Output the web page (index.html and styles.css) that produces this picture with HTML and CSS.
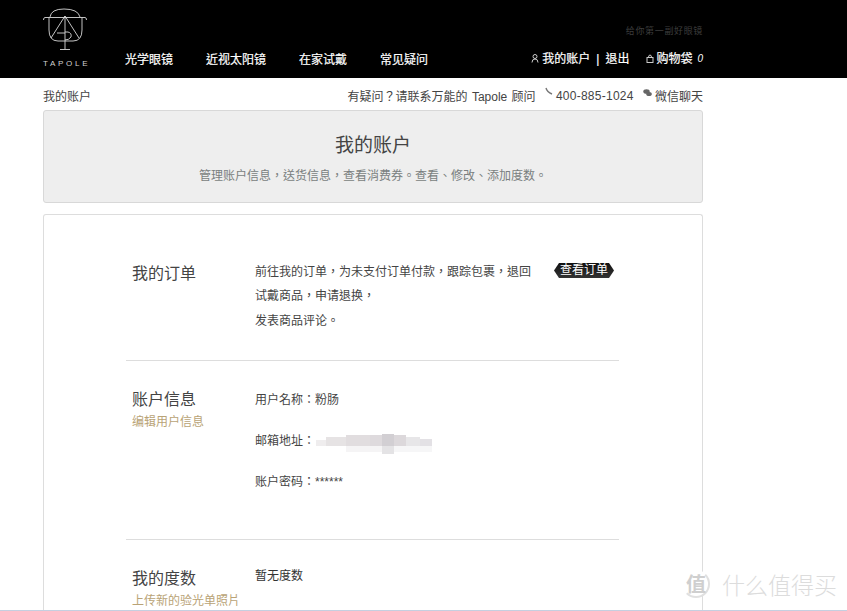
FILE: index.html
```html
<!DOCTYPE html>
<html lang="zh-TW">
<head>
<meta charset="utf-8">
<title>我的账户 - Tapole</title>
<link rel="stylesheet" href="styles.css">
</head>
<body>
<header class="topbar">
  <div class="brand">
    <svg class="logo" width="46" height="44" viewBox="0 0 46 44" fill="none" stroke="#d8d8d8" stroke-width="0.900">
      <path d="M7 9 Q8 1 21 1 Q35 1 37 9"/>
      <path d="M0.500 12 Q0.500 9.500 2 9.500 H42 Q43.500 9.500 43.500 12"/>
      <path d="M6 9.500 V22 Q6 33 15 33 H30 Q39 33 39 22 V9.500"/>
      <path d="M22 8 L8 30 M22 8 L36 30"/>
      <path d="M14 25 H22"/>
      <path d="M22 8 V41 M17 41.500 H27"/>
      <path d="M22 24 H25 Q29 25 28 29 Q26 32 22 32"/>
    </svg>
    <div class="wordmark">TAPOLE</div>
  </div>
  <div class="topmain">
    <div class="slogan">给你第一副好眼镜</div>
    <div class="navrow">
      <nav class="nav">
        <a>光学眼镜</a><a>近视太阳镜</a><a>在家试戴</a><a>常见疑问</a>
      </nav>
      <div class="account">
        <svg width="8" height="9" viewBox="0 0 8 9" fill="none" stroke="#ccc"><circle cx="4" cy="2.500" r="2"/><path d="M1 8.500 Q1 5 4 5 Q7 5 7 8.500"/></svg>
        <span class="acct-text">我的账户</span><span class="sep">|</span><span>退出</span>
        <svg class="bag" width="8" height="9" viewBox="0 0 8 9" fill="none" stroke="#ccc"><rect x="1" y="3.500" width="6" height="5"/><path d="M2.500 3.500 Q2.500 1 4 1 Q5.500 1 5.500 3.500"/></svg>
        <span class="bag-text">购物袋</span><em class="count">0</em>
      </div>
    </div>
  </div>
</header>

<main class="page">
  <div class="crumbs">
    <span>我的账户</span>
    <div class="help">
      <span class="ask">有疑问？请联系万能的 Tapole 顾问</span>
      <span class="help-item">
        <svg width="8" height="9" viewBox="0 0 8 9" fill="none" stroke="#777" stroke-width="1.400"><path d="M1 1 Q2 5 7 7"/></svg>
        <span class="phone">400-885-1024</span></span>
      <span class="help-item">
        <svg width="9" height="8" viewBox="0 0 9 8" fill="#666"><ellipse cx="3.500" cy="2.500" rx="3.200" ry="2.300"/><ellipse cx="6" cy="5" rx="2.800" ry="2"/></svg>
        微信聊天</span>
    </div>
  </div>

  <section class="hero">
    <h1>我的账户</h1>
    <p>管理账户信息，送货信息，查看消费券。查看、修改、添加度数。</p>
  </section>

  <section class="card">
    <div class="row row-orders">
      <div class="label"><h2>我的订单</h2></div>
      <div class="body orders-text">
        <p>前往我的订单，为未支付订单付款，跟踪包裹，退回</p>
        <p>试戴商品，申请退换，</p>
        <p>发表商品评论。</p>
      </div>
      <a class="pill">查看订单</a>
    </div>
    <div class="row row-info">
      <div class="label"><h2>账户信息</h2><a class="sub">编辑用户信息</a></div>
      <div class="body info-text">
        <p>用户名称：粉肠</p>
        <p class="email">邮箱地址：<svg class="mosaic" width="116" height="24" viewBox="0 0 116 24">
          <g fill="#e6e3e4"><rect x="0" y="6" width="10" height="6" fill="#efedee"/><rect x="10" y="3" width="20" height="9"/><rect x="30" y="1" width="24" height="11" fill="#e1dddf"/><rect x="54" y="1" width="12" height="11" fill="#dedadd"/><rect x="66" y="0" width="12" height="12" fill="#d2cfd3"/><rect x="78" y="1" width="12" height="11" fill="#dcd8db"/><rect x="90" y="3" width="14" height="9" fill="#e7e6e8"/><rect x="104" y="5" width="12" height="7" fill="#e3e1e5"/><rect x="30" y="12" width="36" height="6" fill="#f5f4f5"/><rect x="66" y="12" width="12" height="8" fill="#e4e3e5"/><rect x="78" y="12" width="38" height="6" fill="#f6f6f7"/></g>
        </svg></p>
        <p>账户密码：******</p>
      </div>
    </div>
    <div class="row row-rx">
      <div class="label"><h2>我的度数</h2><a class="sub">上传新的验光单照片</a></div>
      <div class="body"><p class="dark">暂无度数</p></div>
    </div>
  </section>
</main>

<div class="watermark">
  <span class="wm-badge">值</span><span class="wm-text">什么值得买</span>
</div>
</body>
</html>
```

FILE: styles.css
```css
* { box-sizing: border-box; }
html, body { margin: 0; padding: 0; height: 611px; overflow: hidden; }
body {
  background: #fff;
  color: #555;
  font-family: "Liberation Sans", "Noto Sans CJK TC", sans-serif;
  font-size: 12px;
  border-bottom: 1px solid #c5cfe0;
  position: relative;
}
h1, h2, p { margin: 0; font-weight: normal; }

.topbar {
  background: #000;
  height: 78px;
  display: flex;
  padding: 8px 144px 0 43px;
}
.brand { width: 82px; flex: none; }
.logo { display: block; }
.wordmark {
  color: #d0d0d0;
  font-size: 8px;
  letter-spacing: 2.700px;
  line-height: 10px;
  margin-top: 7px;
  font-family: "Liberation Sans", sans-serif;
}
.topmain { flex: 1; display: flex; flex-direction: column; }
.slogan {
  color: #3c3c3c;
  font-family: "Noto Sans CJK TC", sans-serif;
  font-size: 9px;
  letter-spacing: 0.650px;
  line-height: 12px;
  text-align: right;
  margin-top: 17px;
}
.navrow {
  display: flex;
  justify-content: space-between;
  align-items: center;
  margin-top: 15px;
  color: #fff;
  font-weight: 400;
}
.nav { display: flex; gap: 33px; font-size: 12px; line-height: 16px; }
.nav a { color: #fff; -webkit-text-stroke: 0.2px #fff; }
.account { display: flex; align-items: center; gap: 3px; line-height: 16px; margin-top: -3px; -webkit-text-stroke: 0.2px #fff; }
.sep { margin: 0 3px 0 3px; }
.bag { margin-left: 14px; }
.bag-text { margin-left: -1px; }
.count { font-size: 10px; margin-left: 2px; -webkit-text-stroke: 0; }

.page { padding: 0 144px 0 43px; }
.crumbs {
  height: 32px;
  display: flex;
  justify-content: space-between;
  align-items: center;
  padding-top: 3px;
  color: #444;
}
.help { display: flex; gap: 9px; }
.ask { word-spacing: 1px; }
.phone { letter-spacing: 0.250px; }
.help-item svg { vertical-align: 4px; }

.hero {
  height: 93px;
  background: #eee;
  border: 1px solid #d8d8d8;
  border-radius: 3px;
  text-align: center;
  padding-top: 23px;
}
.hero h1 { font-size: 19px; line-height: 24px; color: #444; }
.hero p { margin-top: 9px; font-size: 12px; line-height: 18px; color: #7a7f80; }

.card {
  margin-top: 11px;
  border: 1px solid #ddd;
  border-bottom: 0;
  border-radius: 3px 3px 0 0;
  height: 396px;
  padding: 0 83px 0 82px;
}
.row {
  display: flex;
  border-bottom: 1px solid #ddd;
  padding-left: 6px;
}
.row:last-child { border-bottom: 0; }
.row-orders { height: 146px; padding-top: 44px; }
.row-info { height: 179px; padding-top: 26px; }
.row-rx { padding-top: 26px; }
.label { width: 123px; flex: none; padding-top: 1px; }
.label h2 { font-size: 16px; line-height: 24px; color: #444; }
.row-orders .label { padding-top: 3px; }
.sub { display: block; color: #b9a376; font-size: 12px; line-height: 18px; margin-top: 1px; }
.body { color: #444; }
.orders-text { width: 299px; flex: none; padding-top: 0.500px; }
.orders-text p { line-height: 24.500px; }
.info-text { padding-top: 1px; }
.info-text p { line-height: 24px; height: 41px; }
.email { display: flex; align-items: flex-start; }
.mosaic { flex: none; margin-top: 5px; margin-left: 1px; }
.row-rx .body { margin-top: -2px; }
.dark { color: #333; line-height: 24px; }
.pill {
  align-self: flex-start;
  margin-top: 4px;
  background: linear-gradient(#111, #333);
  color: #fff;
  line-height: 15px;
  padding: 0 6px;
  clip-path: polygon(5px 0, calc(100% - 5px) 0, 100% 50%, calc(100% - 5px) 100%, 5px 100%, 0 50%);
}

.watermark {
  position: absolute;
  right: 10px;
  bottom: 12px;
  display: flex;
  align-items: center;
  gap: 12px;
  color: #dcdcdc;
  font-family: "Noto Sans CJK TC", sans-serif;
}
.wm-badge {
  width: 28px;
  height: 28px;
  border-radius: 50%;
  border: 2px solid;
  border-color: transparent #e0e0e0 #e0e0e0 transparent;
  background: #fff;
  color: #cfcfcf;
  font-size: 20px;
  line-height: 24px;
  text-align: center;
  font-weight: 700;
}
.wm-text { font-size: 23px; line-height: 24px; font-weight: 300; }
```
